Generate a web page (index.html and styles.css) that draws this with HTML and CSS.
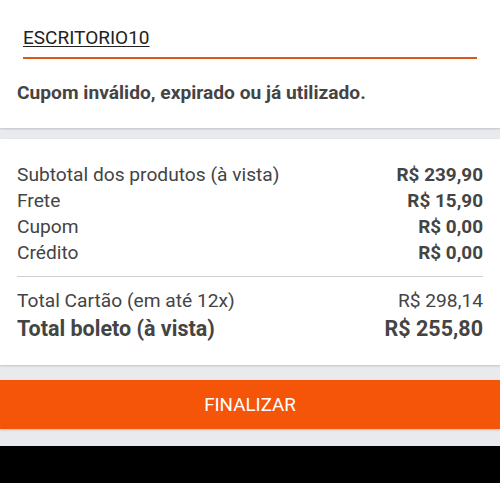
FILE: index.html
```html
<!DOCTYPE html>
<html lang="pt-BR">
<head>
<meta charset="utf-8">
<link rel="stylesheet" href="styles.css">
</head>
<body>
<div class="page">
  <section class="card coupon">
    <div class="field">
      <span class="field-text">ESCRITORIO10</span>
    </div>
    <p class="error">Cupom inválido, expirado ou já utilizado.</p>
  </section>
  <section class="card summary">
    <div class="row"><span>Subtotal dos produtos (à vista)</span><b>R$ 239,90</b></div>
    <div class="row"><span>Frete</span><b>R$ 15,90</b></div>
    <div class="row"><span>Cupom</span><b>R$ 0,00</b></div>
    <div class="row"><span>Crédito</span><b>R$ 0,00</b></div>
    <hr class="divider">
    <div class="row"><span>Total Cartão (em até 12x)</span><span>R$ 298,14</span></div>
    <div class="row total"><span>Total boleto (à vista)</span><span>R$ 255,80</span></div>
  </section>
  <button class="finish">FINALIZAR</button>
  <div class="navbar"></div>
</div>
</body>
</html>
```
FILE: styles.css
```css
* { box-sizing: border-box; }
html, body { margin: 0; padding: 0; }
body {
  background: #e8eaed;
  font-family: Roboto, "Liberation Sans", sans-serif;
  color: #444;
}
.page {
  display: flex;
  flex-direction: column;
  height: 483px;
}
.card {
  background: #fff;
}
.coupon {
  height: 128px;
  padding: 25px 23px 0 17px;
  box-shadow: 0 1px 2px rgba(0,0,0,0.18);
}
.field {
  margin-left: 6px;
  border-bottom: 2px solid #d9581a;
  height: 34px;
  padding-top: 1px;
}
.field-text {
  font-size: 19px;
  color: #222;
  text-decoration: underline;
  text-decoration-thickness: 1px;
  text-underline-offset: 2px;
}
.error {
  margin: 22px 0 0;
  font-size: 19.2px;
  font-weight: 700;
  color: #444;
}
.summary {
  margin-top: 11px;
  height: 226px;
  padding: 23px 17px 0 17px;
  box-shadow: 0 1px 2px rgba(0,0,0,0.18);
}
.row {
  display: flex;
  justify-content: space-between;
  font-size: 19.2px;
  line-height: 26px;
  color: #444;
}
.row b { font-weight: 700; font-size: 18.9px; }
.divider {
  border: 0;
  border-top: 1px solid #cfcfcf;
  margin: 10px 0 11px;
}
.row.total {
  font-size: 21.5px;
  font-weight: 700;
  line-height: 28px;
  margin-top: 1px;
}
.finish {
  margin-top: 15px;
  height: 49px;
  border: 0;
  background: #f45509;
  color: #fff;
  font-family: Roboto, "Liberation Sans", sans-serif;
  font-size: 18.8px;
  box-shadow: 0 1px 2px rgba(0,0,0,0.2);
}
.navbar {
  margin-top: auto;
  height: 37px;
  background: #000;
}
```
